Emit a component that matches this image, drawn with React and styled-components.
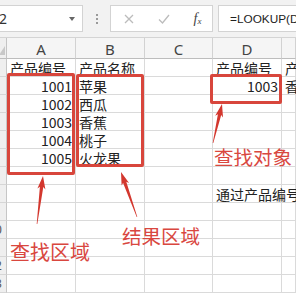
import React from 'react';
import styled, { createGlobalStyle } from 'styled-components';

const Global = createGlobalStyle`
  html, body { margin: 0; padding: 0; background: #fff; }
  body { width: 296px; height: 296px; overflow: hidden; font-family: "Noto Sans CJK SC", "Noto Sans", sans-serif; }
  * { box-sizing: border-box; }
`;

const Page = styled.div`
  position: relative;
  width: 296px;
  height: 296px;
  overflow: hidden;
  background: #fff;
`;

const Toolbar = styled.div`
  display: flex;
  align-items: flex-start;
  height: 38px;
  padding-top: 5px;
  background: #f2f2f2;
  border-bottom: 1px solid #d4d4d4;
`;

const Box = styled.div`
  height: 27px;
  background: #fff;
  border: 1px solid #d3d3d3;
  display: flex;
  align-items: center;
`;

const NameBox = styled(Box)`
  width: 83px;
  border-left: none;
  justify-content: space-between;
  padding-right: 7px;
  font-family: "Noto Sans", sans-serif;
  font-size: 14px;
  color: #333;
`;

const NameText = styled.span`
  margin-left: -1px;
`;

const Caret = styled.span`
  width: 0;
  height: 0;
  border-left: 3.5px solid transparent;
  border-right: 3.5px solid transparent;
  border-top: 4px solid #666;
  margin-top: 1px;
`;

const Separator = styled.div`
  width: 27px;
  height: 27px;
  display: flex;
  flex-direction: column;
  align-items: center;
  justify-content: center;
  gap: 2px;
`;

const Dot = styled.span`
  width: 2px;
  height: 2px;
  background: #9a9a9a;
`;

const FxBox = styled(Box)`
  width: 103px;
  display: grid;
  grid-template-columns: 36px 34px 33px;
  justify-items: center;
`;

const Fx = styled.span`
  font-family: "Liberation Serif", serif;
  font-style: italic;
  font-size: 14px;
  color: #444;
  line-height: 1;
`;

const FxSub = styled.span`
  font-size: 9px;
  vertical-align: -1px;
`;

const FormulaBox = styled(Box)`
  flex: 1;
  margin-left: 5px;
  border-right: none;
  padding-left: 11px;
  font-family: "Liberation Sans", sans-serif;
  font-size: 11.8px;
  color: #222;
  white-space: nowrap;
  overflow: hidden;
`;

const Sheet = styled.div`
  display: grid;
  grid-template-columns: 7px 69px 69px 68px 69px 14px;
  grid-template-rows: 21px repeat(13, 18px);
`;

const Corner = styled.div`
  background: #efefef;
  border-right: 1px solid #c4c4c4;
  border-bottom: 1px solid #bdbdbd;
  position: relative;
  &::after {
    content: '';
    position: absolute;
    right: 1px;
    bottom: 3px;
    border-left: 6px solid transparent;
    border-bottom: 9px solid #c8c8c8;
  }
`;

const ColHead = styled.div`
  background: #f5f5f5;
  border-right: 1px solid #d2d2d2;
  border-bottom: 1px solid #bdbdbd;
  display: flex;
  align-items: center;
  justify-content: center;
  font-family: "Noto Sans", sans-serif;
  font-size: 15px;
  color: #444;
  padding-top: 1px;
`;

const RowHead = styled.div`
  background: #efefef;
  border-right: 1px solid #c6c6c6;
  border-bottom: 1px solid #d6d6d6;
  display: flex;
  justify-content: flex-end;
  align-items: center;
  overflow: hidden;
`;

const RowNum = styled.span`
  flex: 0 0 22px;
  text-align: center;
  font-family: "Noto Sans", sans-serif;
  font-size: 12px;
  color: #555;
`;

const Cell = styled.div`
  border-right: 1px solid #dadada;
  border-bottom: 1px solid #dadada;
  display: flex;
  align-items: center;
  justify-content: ${p => (p.$num ? 'flex-end' : 'flex-start')};
  padding: ${p => (p.$num ? '0 3px 0 0' : '0 0 0 3px')};
  font-size: 14px;
  color: #222;
  white-space: nowrap;
  line-height: 1;
  position: relative;
  z-index: ${p => (p.$spill ? 2 : 1)};
  background: ${p => (p.$spill ? '#fff' : 'transparent')};
`;

const RedBox = styled.div`
  position: absolute;
  left: ${p => p.$x}px;
  top: ${p => p.$y}px;
  width: ${p => p.$w}px;
  height: ${p => p.$h}px;
  border: 3px solid #d8463c;
  border-radius: 2px;
  z-index: 5;
  pointer-events: none;
`;

const Annot = styled.div`
  position: absolute;
  left: ${p => p.$x}px;
  top: ${p => p.$y}px;
  font-family: "Noto Sans CJK SC", sans-serif;
  font-size: ${p => p.$size}px;
  line-height: 1;
  color: #d9473f;
  white-space: nowrap;
  z-index: 6;
`;

const Overlay = styled.svg`
  position: absolute;
  left: 0;
  top: 0;
  z-index: 6;
  pointer-events: none;
`;

function arrowPoints(tail, tip) {
  const [tx, ty] = tail;
  const [hx, hy] = tip;
  const dx = hx - tx;
  const dy = hy - ty;
  const L = Math.hypot(dx, dy);
  const ux = dx / L;
  const uy = dy / L;
  const px = -uy;
  const py = ux;
  const head = 11;
  const bx = hx - ux * head;
  const by = hy - uy * head;
  const wx = hx - ux * (head + 2);
  const wy = hy - uy * (head + 2);
  const pts = [
    [tx + px * 0.3, ty + py * 0.3],
    [bx + px * 1.7, by + py * 1.7],
    [wx + px * 4, wy + py * 4],
    [hx, hy],
    [wx - px * 4, wy - py * 4],
    [bx - px * 1.7, by - py * 1.7],
    [tx - px * 0.3, ty - py * 0.3],
  ];
  return pts.map(p => p.map(v => v.toFixed(1)).join(',')).join(' ');
}

const arrows = [
  { tail: [37, 224], tip: [43, 176] },
  { tail: [137, 217], tip: [121, 172] },
  { tail: [213, 143], tip: [222, 104] },
];

const rows = [
  ['产品编号', '产品名称', '', '产品编号', '产品名称'],
  ['1001', '苹果', '', '1003', '香蕉'],
  ['1002', '西瓜', '', '', ''],
  ['1003', '香蕉', '', '', ''],
  ['1004', '桃子', '', '', ''],
  ['1005', '火龙果', '', '', ''],
  ['', '', '', '', ''],
  ['', '', '', '通过产品编号查找产品名称', ''],
  ['', '', '', '', ''],
  ['', '', '', '', ''],
  ['', '', '', '', ''],
  ['', '', '', '', ''],
  ['', '', '', '', ''],
];

const isNum = v => /^\d+$/.test(v);

export default function App() {
  return (
    <Page>
      <Global />
      <Toolbar>
        <NameBox>
          <NameText>2</NameText>
          <Caret />
        </NameBox>
        <Separator>
          <Dot />
          <Dot />
          <Dot />
        </Separator>
        <FxBox>
          <svg width="10" height="10" viewBox="0 0 10 10">
            <path d="M1 1 L9 9 M9 1 L1 9" stroke="#bcbcbc" strokeWidth="1.3" fill="none" />
          </svg>
          <svg width="12" height="10" viewBox="0 0 12 10">
            <path d="M1 5.5 L4.5 9 L11 1" stroke="#bcbcbc" strokeWidth="1.3" fill="none" />
          </svg>
          <Fx>
            f<FxSub>x</FxSub>
          </Fx>
        </FxBox>
        <FormulaBox>=LOOKUP(D2,A2:A6,B2:B6)</FormulaBox>
      </Toolbar>
      <Sheet>
        <Corner />
        {['A', 'B', 'C', 'D', 'E'].map(c => (
          <ColHead key={c}>{c === 'E' ? '' : c}</ColHead>
        ))}
        {rows.map((r, i) => (
          <React.Fragment key={i}>
            <RowHead>
              <RowNum>{i + 1}</RowNum>
            </RowHead>
            {r.map((v, j) => (
              <Cell key={j} $num={isNum(v)} $spill={v.length > 6}>
                {v}
              </Cell>
            ))}
          </React.Fragment>
        ))}
      </Sheet>

      <RedBox $x={7} $y={73} $w={68} $h={102} />
      <RedBox $x={76} $y={74} $w={68} $h={93} />
      <RedBox $x={210} $y={74} $w={72} $h={30} />

      <Overlay width="296" height="296" viewBox="0 0 296 296">
        {arrows.map((a, i) => (
          <polygon key={i} points={arrowPoints(a.tail, a.tip)} fill="#d3372e" />
        ))}
      </Overlay>

      <Annot $x={214} $y={147} $size={19.5}>查找对象</Annot>
      <Annot $x={122} $y={226} $size={19.5}>结果区域</Annot>
      <Annot $x={10} $y={242} $size={20}>查找区域</Annot>
    </Page>
  );
}
